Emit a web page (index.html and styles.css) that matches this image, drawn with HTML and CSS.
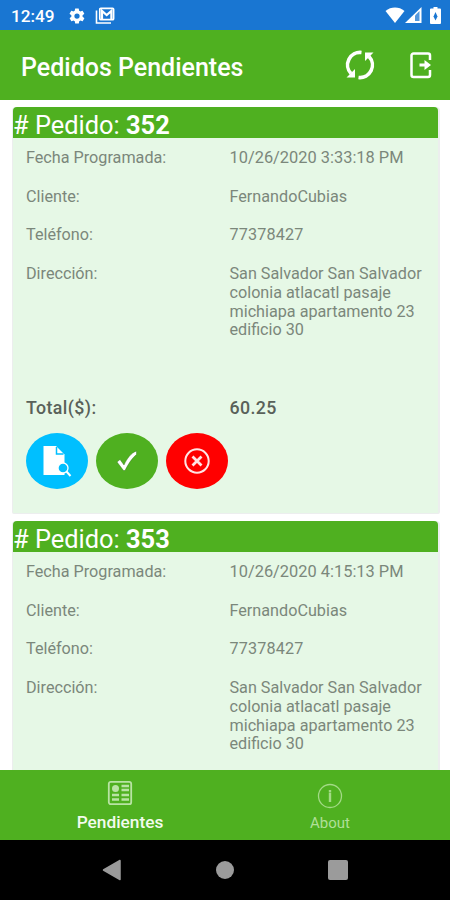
FILE: index.html
```html
<!DOCTYPE html>
<html lang="es">
<head>
  <meta charset="UTF-8" />
  <title>Pedidos Pendientes</title>
  <meta name="viewport" content="width=device-width, initial-scale=1.0" />
  <link rel="stylesheet" href="styles.css">
</head>
<body>

  <div class="status">
    <span class="clock">12:49</span>
    <svg class="gear" width="18" height="18" viewBox="0 0 24 24"><path fill="#fff" fill-rule="evenodd" d="M19.4 13a7.500 7.500 0 0 0 0-2l2.100-1.600a.5.5 0 0 0 .1-.6l-2-3.500a.5.5 0 0 0-.6-.2l-2.500 1a7.300 7.300 0 0 0-1.700-1L14.400 2.400a.5.5 0 0 0-.5-.4h-4a.5.5 0 0 0-.5.400L9 5.100a7.300 7.300 0 0 0-1.700 1l-2.500-1a.5.5 0 0 0-.6.200l-2 3.500a.5.5 0 0 0 .1.600L4.500 11a7.500 7.500 0 0 0 0 2l-2.100 1.600a.5.5 0 0 0-.1.600l2 3.500c.1.200.4.300.6.200l2.500-1a7.300 7.300 0 0 0 1.700 1l.4 2.700c0 .2.200.4.500.4h4c.2 0 .5-.2.500-.4l.4-2.700a7.300 7.300 0 0 0 1.700-1l2.500 1c.2.100.5 0 .6-.2l2-3.500a.5.5 0 0 0-.1-.6zM12 15.500a3.500 3.500 0 1 1 0-7 3.500 3.500 0 0 1 0 7z"/></svg>
    <svg class="mail" width="20" height="18" viewBox="0 0 20 18">
      <path d="M1.500 3.500v12.500h14.500" fill="none" stroke="#fff" stroke-width="1.600"/>
      <rect x="4.800" y="1.300" width="13.800" height="11.400" rx="1" fill="none" stroke="#fff" stroke-width="1.700"/>
      <path d="M7 13V4l4.700 4L16.400 4v9" fill="none" stroke="#fff" stroke-width="2.200"/>
    </svg>
    <div class="signals">
      <svg width="20" height="17" viewBox="0 0 20 17"><path d="M.5 4C6-.6 14-.6 19.500 4L10 16z" fill="#fff"/></svg>
      <svg width="17" height="17" viewBox="0 0 17 17"><path d="M0 16L16.500 0v16z" fill="#fff"/><path d="M10 8.500L14.500 4v10H10z" fill="#1976d2" opacity=".75"/></svg>
      <svg class="battery" width="11" height="17" viewBox="0 0 11 17"><path d="M3.500 0h4v1.500H10a1 1 0 0 1 1 1V16a1 1 0 0 1-1 1H1a1 1 0 0 1-1-1V2.500a1 1 0 0 1 1-1h2.500z" fill="#fff"/><path d="M5.500 5l2 4.500-2 4-2-4z" fill="#1976d2"/></svg>
    </div>
  </div>

  <header class="toolbar">
    <h1>Pedidos Pendientes</h1>
    <svg class="refresh" width="32" height="30" viewBox="0 0 32 30" fill="none" stroke="#fff" stroke-width="3.600">
      <path d="M17.500 2.500A12.500 12.500 0 0 0 7 23.500M14.500 27.500A12.500 12.500 0 0 0 25 6.500"/>
      <path d="M11 19v8.500H2.500zM21 11V2.500h8.500z" fill="#fff" stroke="none"/>
    </svg>
    <svg class="exit" width="24" height="28" viewBox="0 0 24 28">
      <path d="M21 9V4.500a2 2 0 0 0-2-2H4.500a2 2 0 0 0-2 2v19.500a2 2 0 0 0 2 2H19a2 2 0 0 0 2-2v-5" fill="none" stroke="#fff" stroke-width="2.500"/>
      <path d="M10.500 12.500h5V9l6.500 5-6.500 5v-3.500h-5z" fill="#fff"/>
    </svg>
  </header>

  <main class="orders">
    <section class="card">
      <h2># Pedido: <b>352</b></h2>
      <dl class="fields">
        <dt>Fecha Programada:</dt><dd>10/26/2020 3:33:18 PM</dd>
        <dt>Cliente:</dt><dd>FernandoCubias</dd>
        <dt>Teléfono:</dt><dd class="phone">77378427</dd>
        <dt>Dirección:</dt><dd class="address">San Salvador San Salvador colonia atlacatl pasaje michiapa apartamento 23 edificio 30</dd>
        <dt class="total">Total($):</dt><dd class="total">60.25</dd>
      </dl>
      <div class="actions">
        <button class="btn view">
          <svg width="30" height="32" viewBox="0 0 30 32">
            <path d="M1.500 1H14l8.500 8.500V30h-21z" fill="#fff"/>
            <path d="M14.500 2v7h7" fill="none" stroke="#00bfff" stroke-width="1.500"/>
            <circle cx="21" cy="23" r="5" fill="#00bfff" stroke="#fff" stroke-width="1.300"/>
            <path d="M24.500 26.500l4 4.500" stroke="#fff" stroke-width="2"/>
          </svg>
        </button>
        <button class="btn accept">
          <svg width="22" height="22" viewBox="0 0 22 22"><path d="M1 12l3-2.500 4 5.500C11 8.500 15 3 20.500 1v3.500C16 8 12 14.500 9 20.500H7.500z" fill="#fff" stroke="#286b12" stroke-width=".4"/></svg>
        </button>
        <button class="btn cancel">
          <svg width="26" height="26" viewBox="0 0 26 26" fill="none" stroke="#ffe5e5"><circle cx="13" cy="13" r="11.700" stroke-width="2"/><path d="M8.500 8.500l9 9M17.500 8.500l-9 9" stroke-width="2.800"/></svg>
        </button>
      </div>
    </section>

    <section class="card">
      <h2># Pedido: <b>353</b></h2>
      <dl class="fields">
        <dt>Fecha Programada:</dt><dd>10/26/2020 4:15:13 PM</dd>
        <dt>Cliente:</dt><dd>FernandoCubias</dd>
        <dt>Teléfono:</dt><dd class="phone">77378427</dd>
        <dt>Dirección:</dt><dd class="address">San Salvador San Salvador colonia atlacatl pasaje michiapa apartamento 23 edificio 30</dd>
      </dl>
    </section>
  </main>

  <nav class="tabs">
    <a class="tab active">
      <svg width="26" height="26" viewBox="0 0 26 26" fill="none" stroke="#b9e3a4">
        <rect x="1.800" y="1.800" width="22.400" height="22.400" rx="2" stroke-width="1.800"/>
        <circle cx="8.500" cy="8.500" r="3.500" fill="#b9e3a4" stroke="none"/>
        <path d="M14.500 6H22M14.500 10H22M5 15h7M14.500 15H22M5 19.500h7M14.500 19.500H22" stroke-width="2.400"/>
      </svg>
      <span>Pendientes</span>
    </a>
    <a class="tab">
      <svg width="26" height="26" viewBox="0 0 26 26" fill="none" stroke="#a3da86"><circle cx="13" cy="13" r="11.500" stroke-width="1.300"/><path d="M13 7v2M13 9.500v9.500" stroke-width="2.400"/></svg>
      <span>About</span>
    </a>
  </nav>

  <div class="softkeys">
    <svg width="20" height="22" viewBox="0 0 20 22"><path d="M1.500 11L18 1.500v19z" fill="#9b9b9b" stroke="#9b9b9b" stroke-width="1.500" stroke-linejoin="round"/></svg>
    <span class="home"></span>
    <span class="recent"></span>
  </div>

</body>
</html>
```

FILE: styles.css
```css
* {
  box-sizing: border-box;
}

body {
  margin: 0;
  height: 900px;
  display: flex;
  flex-direction: column;
  overflow: hidden;
  font-family: Roboto, sans-serif;
  background: #fff;
}

svg {
  display: block;
  flex: none;
}

.status {
  height: 30px;
  flex: none;
  display: flex;
  align-items: center;
  padding: 1px 9px 0 11px;
  background: #1976d2;
  color: #fff;
}

.clock {
  width: 57px;
  font-size: 17.2px;
  font-weight: 500;
  padding-top: 1px;
}

.mail {
  margin-left: 9px;
}

.signals {
  display: flex;
  margin-left: auto;
}

.battery {
  margin-left: 8px;
}

.toolbar {
  height: 70px;
  flex: none;
  display: flex;
  align-items: center;
  padding: 0 17px 0 21px;
  background: #4fb020;
  color: #fff;
}

h1 {
  margin: 5px auto 0 0;
  font-size: 25px;
  font-weight: 500;
}

.exit {
  margin-left: 33px;
}

.orders {
  flex: 1;
  min-height: 0;
  overflow: hidden;
  padding: 7px 10px 0 12px;
}

.card {
  height: 407px;
  margin-bottom: 7px;
  background: #e6f8e6;
  border: solid #eceeee;
  border-width: 0 2px 1px 1px;
  border-radius: 4px 4px 2px 2px;
}

h2 {
  height: 31px;
  margin: 0;
  line-height: 36px;
  font-size: 25.4px;
  font-weight: 400;
  background: #4fb020;
  color: #fff;
  border-radius: 4px 4px 0 0;
}

.fields {
  display: grid;
  grid-template-columns: 203.5px 198px;
  row-gap: 20px;
  margin: 0;
  padding: 11px 0 0 13px;
  font-size: 16.2px;
  line-height: 18.7px;
  color: #7b877b;
}

dd {
  margin: 0;
}

dd:first-of-type {
  font-size: 16.4px;
}

.phone {
  letter-spacing: 0.15px;
}

.address {
  min-height: 114px;
}

.total {
  font-weight: 500;
  font-size: 17.8px;
  letter-spacing: 0.4px;
  color: #596159;
}

.actions {
  display: flex;
  gap: 8px;
  padding: 15px 0 0 13px;
}

.btn {
  width: 62px;
  height: 56px;
  display: flex;
  align-items: center;
  justify-content: center;
  padding: 0;
  border: none;
  border-radius: 50%;
}

.view {
  background: #00bfff;
}

.accept {
  background: #4fb020;
}

.cancel {
  background: #f00;
}

.tabs {
  height: 70px;
  flex: none;
  display: flex;
  padding: 0 15px;
  background: #4fb020;
}

.tab {
  flex: 1;
  display: flex;
  flex-direction: column;
  align-items: center;
  padding-top: 13px;
  font-size: 15px;
  line-height: 18px;
  color: #b0df97;
}

.tab span {
  margin-top: 5px;
}

.active {
  padding-top: 10px;
  font-size: 17.3px;
  font-weight: 500;
  color: #f2fbed;
}

.active span {
  margin-top: 7px;
}

.softkeys {
  height: 60px;
  flex: none;
  display: flex;
  align-items: center;
  justify-content: space-between;
  padding: 0 102px;
  background: #000;
}

.home {
  width: 18px;
  height: 18px;
  border-radius: 50%;
  background: #9b9b9b;
}

.recent {
  width: 20px;
  height: 20px;
  border-radius: 2px;
  background: #9b9b9b;
}
```
